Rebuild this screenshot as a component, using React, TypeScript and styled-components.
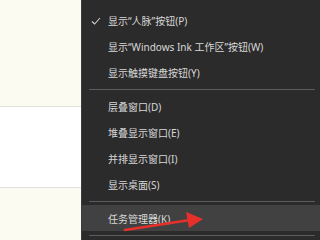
import React from "react";
import styled, { createGlobalStyle } from "styled-components";

const Global = createGlobalStyle`
  html, body { margin: 0; padding: 0; }
  body { width: 320px; height: 240px; overflow: hidden; font-family: "Noto Sans", "Noto Sans CJK SC", sans-serif; }
`;

const Screen = styled.div`
  position: relative;
  width: 320px;
  height: 240px;
  display: flex;
  overflow: hidden;
`;

const Page = styled.div`
  width: 81px;
  display: flex;
  flex-direction: column;
  background: #fcfbf2;
`;

const Band = styled.div<{ $white?: boolean; $h: number }>`
  height: ${(p) => p.$h}px;
  flex: none;
  background: ${(p) => (p.$white ? "#ffffff" : "#fcfbf2")};
  border-bottom: 1px solid #e2e2dc;
  &:last-child { border-bottom: none; flex: 1; }
`;

const Menu = styled.div`
  flex: 1;
  background: #2b2b2b;
  border-left: 1px solid #3c3c3c;
  display: flex;
  flex-direction: column;
  padding: 7px 5px 0 0;
`;

const Item = styled.div<{ $active?: boolean }>`
  height: 26px;
  flex: none;
  display: flex;
  align-items: center;
  padding-left: 26px;
  margin-right: -5px;
  position: relative;
  background: ${(p) => (p.$active ? "#414141" : "transparent")};
  color: #d8d8d8;
  font-family: "Noto Sans", "Noto Sans CJK SC", sans-serif;
  font-size: 10px;
  white-space: nowrap;
`;

const Check = styled.span`
  position: absolute;
  left: 9px;
  top: 8px;
  width: 10px;
  height: 10px;
`;

const Sep = styled.div`
  height: 8px;
  flex: none;
  display: flex;
  align-items: center;
  padding-left: 7px;
  &::after {
    content: "";
    flex: 1;
    height: 1px;
    background: #5c5c5c;
  }
`;

const Arrow = styled.svg`
  position: absolute;
  left: 120px;
  top: 208px;
`;

const items1 = ["显示“人脉”按钮(P)", "显示“Windows Ink 工作区”按钮(W)", "显示触摸键盘按钮(Y)"];
const items2 = ["层叠窗口(D)", "堆叠显示窗口(E)", "并排显示窗口(I)", "显示桌面(S)"];

export default function App() {
  return (
    <Screen>
      <Global />
      <Page>
        <Band $h={106} />
        <Band $white $h={80} />
        <Band $h={54} />
      </Page>
      <Menu>
        {items1.map((t, i) => (
          <Item key={t}>
            {i === 0 && (
              <Check>
                <svg width="10" height="10" viewBox="0 0 10 10">
                  <path d="M1 5.5 L3.6 8 L9 2" fill="none" stroke="#cfcfcf" strokeWidth="1.1" />
                </svg>
              </Check>
            )}
            {t}
          </Item>
        ))}
        <Sep />
        {items2.map((t) => (
          <Item key={t}>{t}</Item>
        ))}
        <Sep />
        <Item $active>任务管理器(K)</Item>
        <Sep />
      </Menu>
      <Arrow width="90" height="30" viewBox="0 0 90 30">
        <path d="M5 22 L70 12" stroke="#e8302a" strokeWidth="2.5" strokeLinecap="round" />
        <path d="M66 4 L83 11 L69 20 Z" fill="#e8302a" />
      </Arrow>
    </Screen>
  );
}
